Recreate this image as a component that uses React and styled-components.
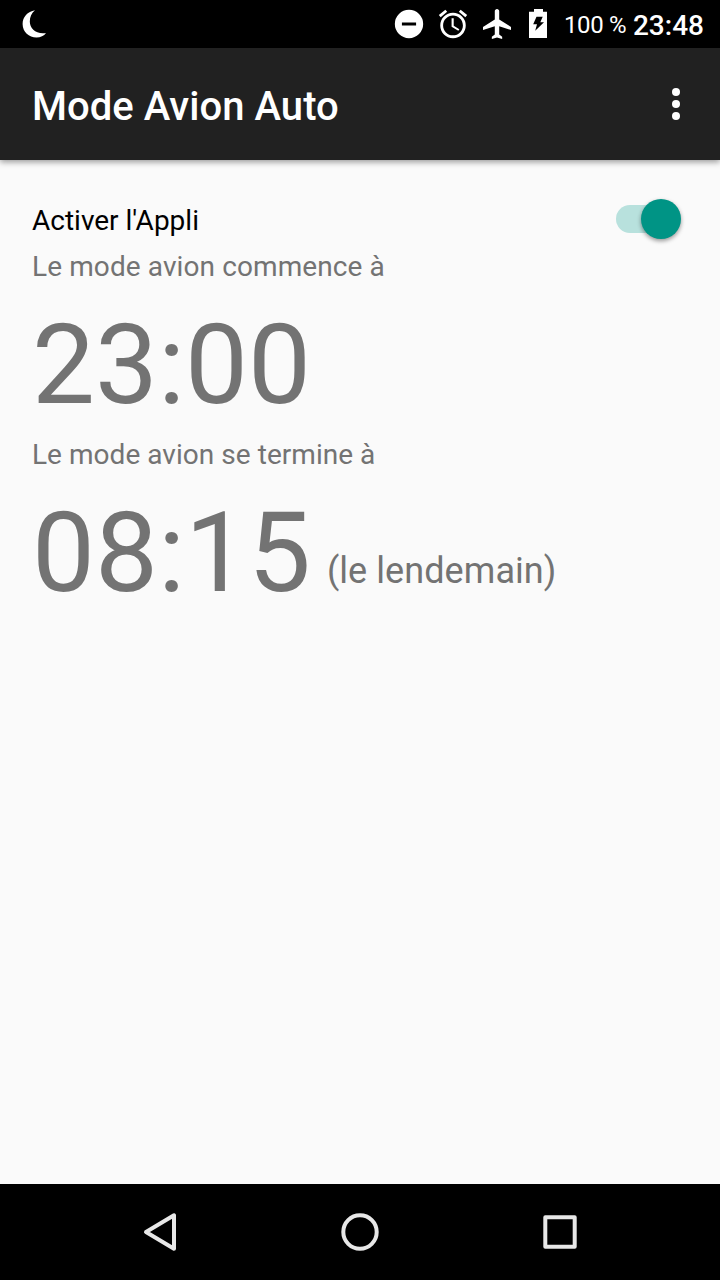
import React from "react";
import styled, { createGlobalStyle } from "styled-components";

const GlobalStyle = createGlobalStyle`
  * { box-sizing: border-box; }
  body {
    margin: 0;
    font-family: Roboto, "Noto Sans", sans-serif;
    background: #fafafa;
  }
`;

const Screen = styled.div`
  display: flex;
  flex-direction: column;
  width: 720px;
  height: 1280px;
  overflow: hidden;
  background: #fafafa;
`;

const StatusBar = styled.header`
  display: flex;
  align-items: center;
  height: 48px;
  padding: 0 16px 0 18px;
  background: #000;
  color: #fff;
`;

const StatusIcons = styled.div`
  display: flex;
  align-items: center;
  gap: 10px;
  margin-left: auto;
`;

const Icon = styled.svg`
  display: block;
  flex: none;
  width: ${(p) => p.$w}px;
  height: ${(p) => p.$h || p.$w}px;
`;

const BatterySlot = styled.div`
  display: flex;
  margin-left: 5px;
`;

const BatteryLevel = styled.span`
  width: 62px;
  margin-left: 17px;
  font-size: 24px;
  line-height: 28px;
  padding-top: 1px;
  letter-spacing: -0.35px;
  white-space: nowrap;
`;

const Clock = styled.span`
  margin-left: 7px;
  font-size: 28px;
  line-height: 33px;
  padding-top: 2px;
  font-weight: 500;
`;

const AppBar = styled.div`
  position: relative;
  display: flex;
  align-items: center;
  justify-content: space-between;
  height: 112px;
  flex: none;
  padding: 0 24px 0 32px;
  background: #212121;
  color: #fff;
  box-shadow: 0 2px 6px rgba(0, 0, 0, 0.4);
`;

const Title = styled.h1`
  margin: 0;
  padding-top: 4px;
  font-size: 40px;
  line-height: 47px;
  font-weight: 500;
  letter-spacing: 0.04px;
`;

const MenuButton = styled.button`
  display: flex;
  flex-direction: column;
  align-items: center;
  gap: 4px;
  width: 40px;
  padding: 0;
  border: 0;
  background: none;
`;

const Dot = styled.span`
  width: 8px;
  height: 8px;
  border-radius: 50%;
  background: #fff;
`;

const Content = styled.main`
  flex: 1;
  padding: 32px;
`;

const SwitchRow = styled.div`
  display: flex;
  align-items: center;
  justify-content: space-between;
  height: 54px;
  padding-right: 7px;
`;

const SwitchLabel = styled.span`
  font-size: 28px;
  line-height: 33px;
  padding-top: 3px;
  color: #000;
`;

const Track = styled.span`
  display: flex;
  align-items: center;
  justify-content: flex-end;
  width: 65px;
  height: 28px;
  border-radius: 14px;
  background: linear-gradient(90deg, #b8e1dd 50px, transparent 50px);
`;

const Thumb = styled.span`
  width: 40px;
  height: 40px;
  border-radius: 50%;
  background: #009485;
  box-shadow: 0 2px 4px rgba(0, 0, 0, 0.4);
`;

const Setting = styled.section`
  color: #737373;
  margin-top: ${(p) => p.$top}px;
`;

const SettingLabel = styled.div`
  font-size: 28px;
  line-height: 33px;
  letter-spacing: ${(p) => p.$tracking}px;
`;

const TimeRow = styled.div`
  display: flex;
  align-items: flex-end;
  margin-top: 16px;
`;

const Time = styled.span`
  font-size: 112px;
  line-height: 131px;
`;

const DayNote = styled.span`
  margin: 0 0 26px 16px;
  font-size: 36px;
  line-height: 42px;
  letter-spacing: 0.07px;
`;

const NavBar = styled.nav`
  display: flex;
  justify-content: center;
  height: 96px;
  flex: none;
  background: #000;
`;

const NavButton = styled.button`
  display: flex;
  align-items: center;
  justify-content: center;
  width: 200px;
  padding: 0;
  border: 0;
  background: none;
`;

const NavIcon = ({ children }) => (
  <Icon $w={40} viewBox="0 0 40 40" fill="none" stroke="#e8e8e8" strokeWidth="4" strokeLinejoin="round">
    {children}
  </Icon>
);

export default function App() {
  return (
    <>
      <GlobalStyle />
      <Screen>
        <StatusBar>
          <Icon $w={34} viewBox="0 0 34 34" fill="#fff">
            <path d="M17 3.2C9.500 4.500 4.600 10 4.600 17C4.600 24.800 11 30.600 18.500 30.600C22.500 30.600 26 28.800 28 26C18 27.500 11.800 21.500 11.800 14.500C11.800 10 13.500 6 17 3.200Z" />
          </Icon>
          <StatusIcons>
            <Icon $w={34} viewBox="0 0 24 24" fill="#fff">
              <path d="M12 2a10 10 0 1 0 0 20 10 10 0 0 0 0-20zm5 11H7v-2h10v2z" />
            </Icon>
            <Icon $w={34} viewBox="0 0 24 24" fill="#fff">
              <path d="M22 5.720l-4.600-3.860-1.290 1.530 4.600 3.860L22 5.720zM7.880 3.390L6.600 1.860 2 5.710l1.290 1.530 4.590-3.850zM12.500 8H11v6l4.750 2.850.75-1.230-4-2.370V8zM12 4c-4.970 0-9 4.030-9 9s4.020 9 9 9a9 9 0 0 0 0-18zm0 16c-3.870 0-7-3.130-7-7s3.130-7 7-7 7 3.130 7 7-3.130 7-7 7z" />
            </Icon>
            <Icon $w={34} viewBox="0 0 34 34" fill="#fff">
              <path transform="translate(0.050 -1) scale(1.474 1.500)" d="M21 16v-2l-8-5V3.500c0-.83-.67-1.500-1.500-1.500S10 2.670 10 3.500V9l-8 5v2l8-2.500V19l-2 1.500V22l3.500-1 3.500 1v-1.500L13 19v-5.500l8 2.500z" />
            </Icon>
            <BatterySlot>
              <Icon $w={18} $h={30} viewBox="0 0 18 30" fill="#fff">
                <path fillRule="evenodd" d="M5 0H14V2.700H18V29H0V2.700H5ZM7.500 7.700L4.200 15.300H8L6.200 21.700L15 13.200H11.300L13.700 7.700Z" />
              </Icon>
            </BatterySlot>
          </StatusIcons>
          <BatteryLevel>100 %</BatteryLevel>
          <Clock>23:48</Clock>
        </StatusBar>
        <AppBar>
          <Title>Mode Avion Auto</Title>
          <MenuButton aria-label="Menu">
            <Dot />
            <Dot />
            <Dot />
          </MenuButton>
        </AppBar>
        <Content>
          <SwitchRow>
            <SwitchLabel>Activer l'Appli</SwitchLabel>
            <Track role="switch" aria-checked="true">
              <Thumb />
            </Track>
          </SwitchRow>
          <Setting $top={4}>
            <SettingLabel $tracking={0.1}>Le mode avion commence à</SettingLabel>
            <TimeRow>
              <Time>23:00</Time>
            </TimeRow>
          </Setting>
          <Setting $top={8}>
            <SettingLabel $tracking={0.04}>Le mode avion se termine à</SettingLabel>
            <TimeRow>
              <Time>08:15</Time>
              <DayNote>(le lendemain)</DayNote>
            </TimeRow>
          </Setting>
        </Content>
        <NavBar>
          <NavButton aria-label="Retour">
            <NavIcon>
              <path d="M6 20L34 3.300V36.700Z" />
            </NavIcon>
          </NavButton>
          <NavButton aria-label="Accueil">
            <NavIcon>
              <circle cx="20" cy="20" r="16.700" />
            </NavIcon>
          </NavButton>
          <NavButton aria-label="Applications">
            <NavIcon>
              <rect x="5.300" y="5.300" width="29.400" height="29.400" />
            </NavIcon>
          </NavButton>
        </NavBar>
      </Screen>
    </>
  );
}
